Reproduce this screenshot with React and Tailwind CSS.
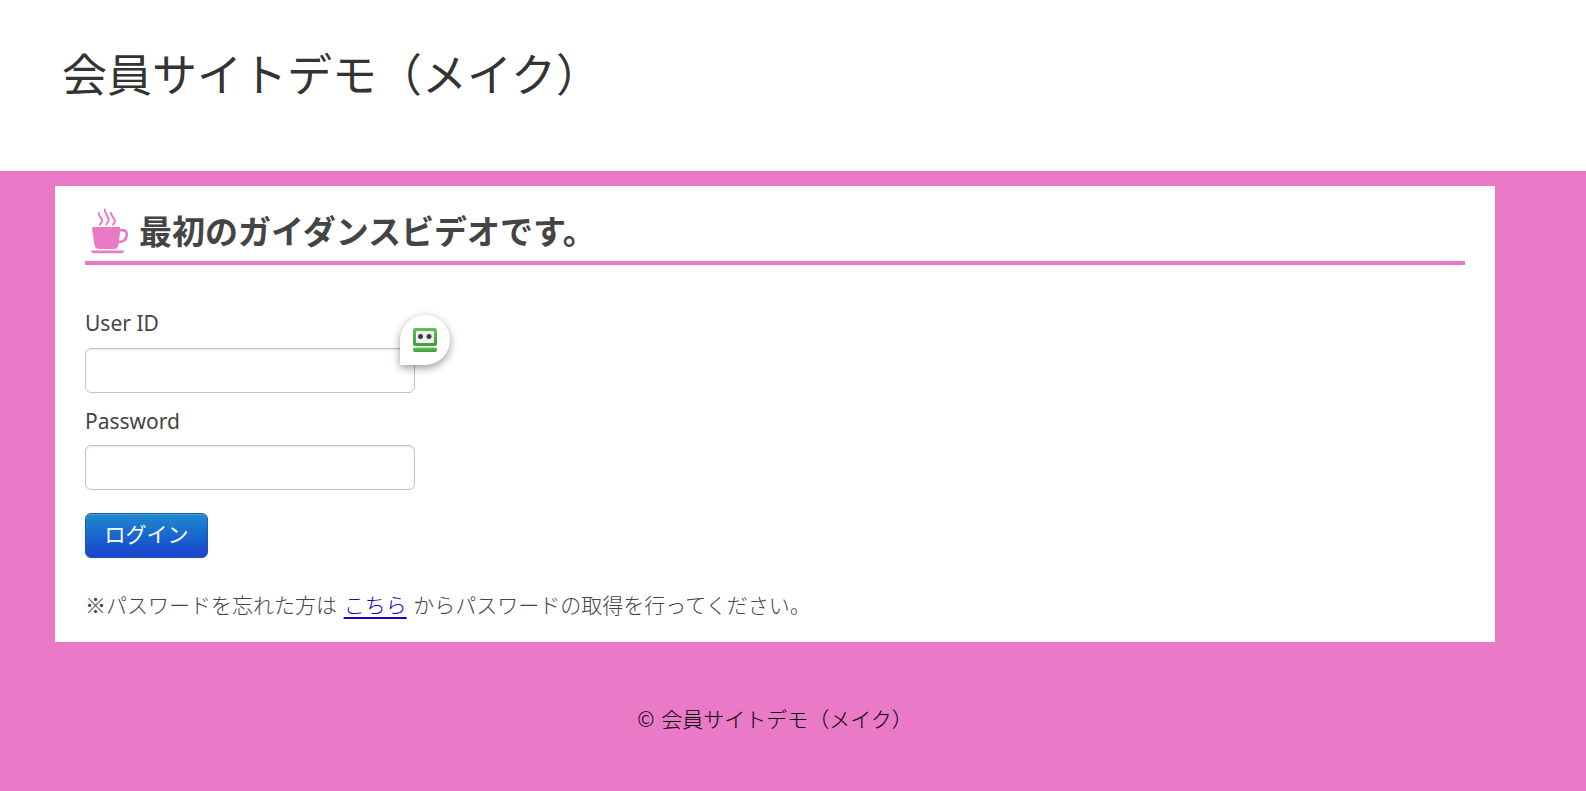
import React from 'react';

function CupIcon() {
    return (
        <svg viewBox="0 0 40 48" className="w-10 h-12 shrink-0" fill="#ea79c8" aria-hidden="true">
            <g fill="none" stroke="#ea79c8" strokeWidth="2" strokeLinecap="round">
                <path d="M9.700 5c-.6 3.500 3.800 4.800 3.500 8c-.1 1.500-1.300 2.500-2.200 3.500" />
                <path d="M15.800 1.500c-.6 4.500 4.300 6.500 3.800 10.500c-.2 1.900-1.200 3.200-2.200 4.500" />
                <path d="M22 5c-.3 3.300 4 5 3.900 8c-.1 1.500-1 2.500-1.900 3.500" />
            </g>
            <path d="M3 20.500q0-1.500 1.500-1.500h25.500q1.500 0 1.400 1.500l-1.700 15.500c-.4 3.500-2 5-5.200 5h-14c-3.300 0-4.900-1.700-5.200-5z" />
            <path d="M31 22.500c4-1.300 7.300.6 6.700 5c-.5 4-3.500 6.300-7.700 6.500" fill="none" stroke="#ea79c8" strokeWidth="2.600" />
            <path d="M2 42.500h33c-.2 1.800-1 2.800-2.500 2.800h-27.500c-1.500 0-2.700-1-3-2.800z" />
        </svg>
    );
}

function RobotIcon() {
    return (
        <svg viewBox="0 0 24 24" className="w-6 h-6" aria-hidden="true">
            <defs>
                <linearGradient id="robotGreen" x1="0" y1="0" x2="0" y2="1">
                    <stop offset="0" stopColor="#5dc253" />
                    <stop offset="1" stopColor="#3f9f38" />
                </linearGradient>
            </defs>
            <rect x="0" y="0" width="24" height="18" rx="2.500" fill="url(#robotGreen)" />
            <rect x="3" y="3" width="18" height="12" rx="1" fill="#efedf2" />
            <circle cx="7.500" cy="8.500" r="2.500" fill="#3d3d47" />
            <circle cx="16" cy="8.500" r="2.500" fill="#3d3d47" />
            <rect x="0" y="19.500" width="24" height="4.500" rx="2" fill="url(#robotGreen)" />
        </svg>
    );
}

const labelClass = "block font-normal font-['Noto_Sans',sans-serif]";
const inputClass =
    'block w-[330px] max-w-full h-[45px] px-2 bg-white border border-[#c4c4c4] rounded-md shadow-[inset_0_1px_2px_rgba(0,0,0,0.1)] outline-none focus:border-blue-400';

function LoginForm() {
    return (
        <form className="mt-10" onSubmit={(e) => e.preventDefault()}>
            <label htmlFor="user_id" className={`${labelClass} h-[43px] leading-9`}>User ID</label>
            <div className="relative w-[330px] max-w-full">
                <input id="user_id" name="user_id" type="text" className={inputClass} />
                <button
                    type="button"
                    aria-label="RoboForm"
                    className="absolute -top-[33px] -right-[35px] w-[50px] h-[50px] flex items-center justify-center bg-white rounded-full rounded-bl-none shadow-[0_3px_8px_rgba(0,0,0,0.4)]"
                >
                    <RobotIcon />
                </button>
            </div>

            <label htmlFor="password" className={`${labelClass} h-[52px] pt-2 leading-10`}>Password</label>
            <input id="password" name="password" type="password" className={inputClass} />

            <button
                type="submit"
                className="mt-[23px] w-[123px] h-[45px] pb-1.5 text-white font-normal rounded-md border border-[#1d5cab] bg-linear-to-b from-[#2289cf] to-[#1c40cb] shadow-[inset_0_1px_0_rgba(255,255,255,0.2),0_1px_2px_rgba(0,0,0,0.05)] cursor-pointer"
            >
                ログイン
            </button>
        </form>
    );
}

function App() {
    return (
        <div className="min-h-screen bg-[#ea79c8] text-[21px] leading-8 font-light text-[#444] font-['Noto_Sans_CJK_JP','Noto_Sans',sans-serif]">
            <header className="h-[171px] bg-white pl-[62px] pt-10">
                <h1 className="text-[45px] leading-[66px] font-normal text-[#333]">会員サイトデモ（メイク）</h1>
            </header>

            <main className="mt-[15px] ml-[55px] mr-[91px] px-[30px] pt-[22px] pb-[22px] bg-white">
                <div className="flex items-start h-[57px] pl-1 border-b-4 border-[#ea79c8]">
                    <CupIcon />
                    <h2 className="ml-2.5 text-[33px] leading-[44px] font-bold">最初のガイダンスビデオです。</h2>
                </div>

                <LoginForm />

                <p className="mt-[30px]">
                    ※パスワードを忘れた方は{' '}
                    <a href="#" className="mx-0.5 text-[#1a00c8] underline decoration-2 underline-offset-4">こちら</a>{' '}
                    からパスワードの取得を行ってください。
                </p>
            </main>

            <footer className="ml-[55px] mr-[91px] pt-[60px] pb-14 text-center text-black">
                <span className="mr-0.5">©</span> 会員サイトデモ（メイク）
            </footer>
        </div>
    );
}

export default App;
